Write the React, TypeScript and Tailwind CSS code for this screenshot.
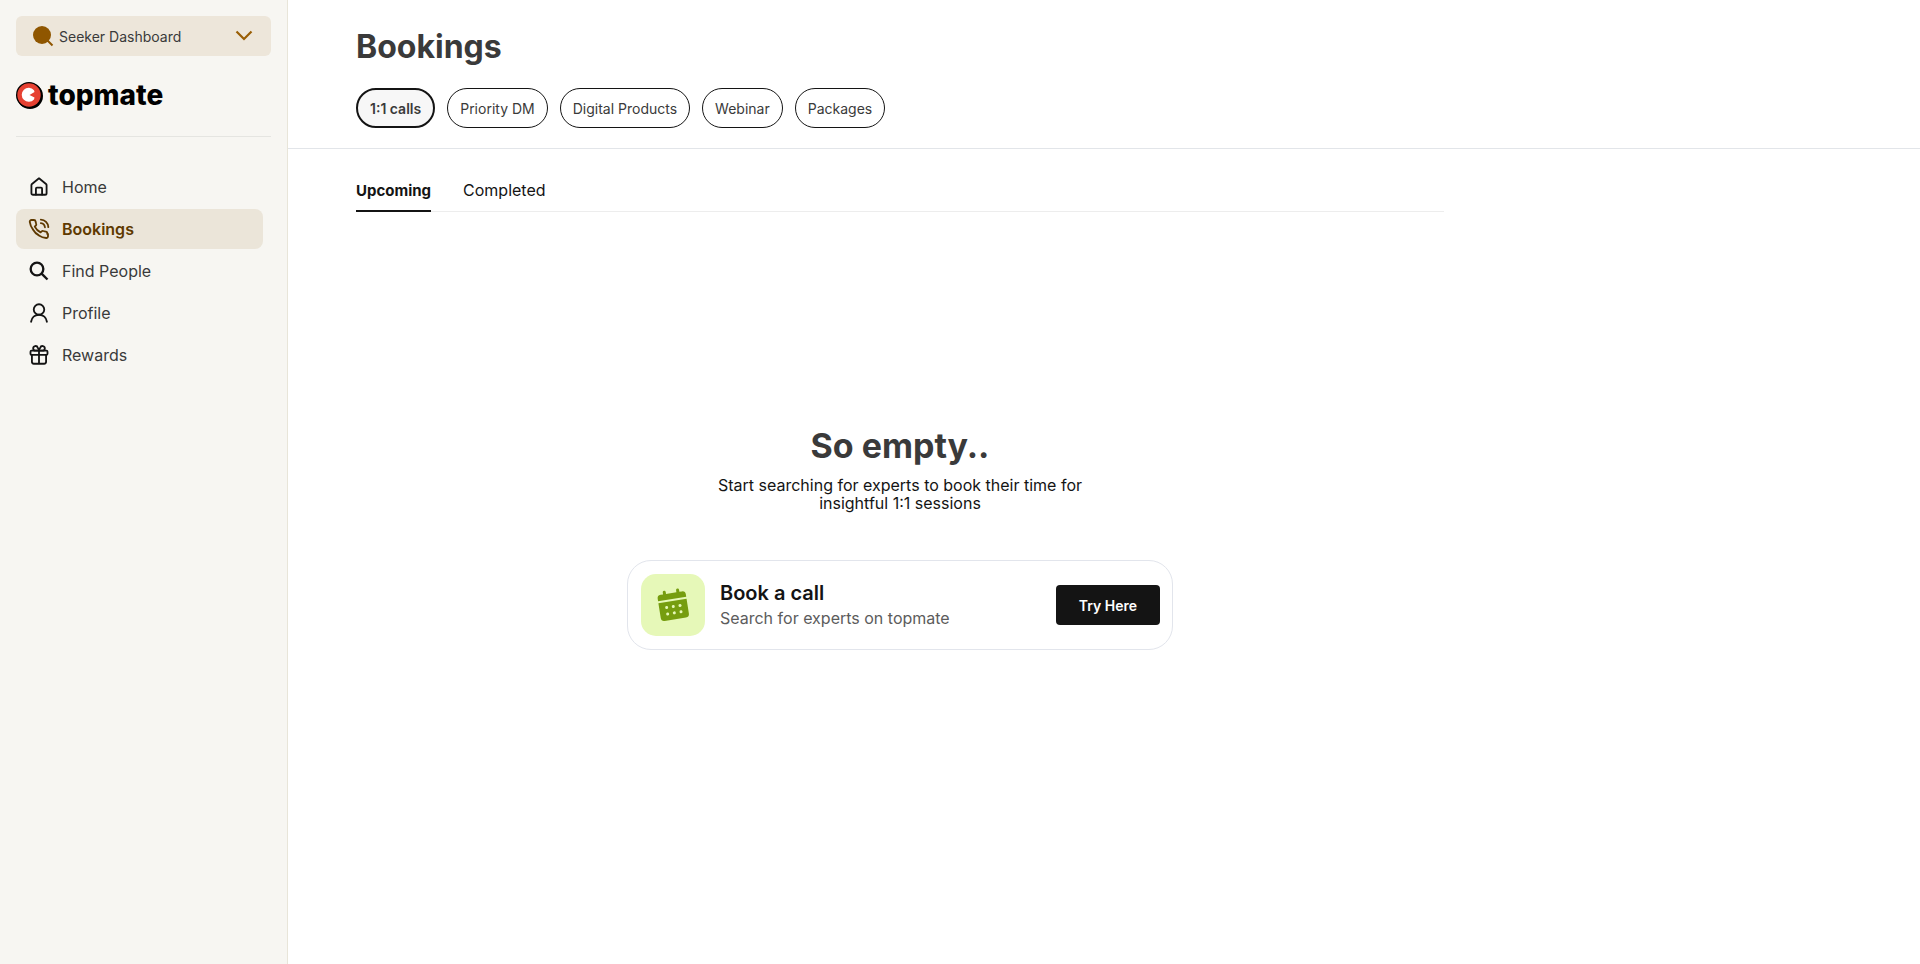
import type { ReactNode } from 'react';
import clsx from 'clsx';

const NAV_ITEMS: { label: string; icon: ReactNode; active?: boolean }[] = [
    {
        label: 'Home',
        icon: (
            <>
                <path d="M2.900 9.800v9.600a1.900 1.900 0 0 0 1.900 1.900h14.400a1.900 1.900 0 0 0 1.900-1.900V9.800a2 2 0 0 0-.7-1.500L12 1.600 3.600 8.300a2 2 0 0 0-.7 1.500z" />
                <path d="M8.300 21v-7a1.200 1.200 0 0 1 1.200-1.200h5a1.200 1.200 0 0 1 1.200 1.200v7" />
            </>
        ),
    },
    {
        label: 'Bookings',
        active: true,
        icon: (
            <>
                <path d="M22.800 17.800v3a2 2 0 0 1-2.200 2 20 20 0 0 1-8.700-3.100 19.700 19.700 0 0 1-7.200-7.200A19.800 19.800 0 0 1 .9 3.400a2 2 0 0 1 2-2.200h3a2 2 0 0 1 2 1.700c.1 1 .4 1.900.7 2.800a2 2 0 0 1-.4 2.100L6.900 9.100a16 16 0 0 0 7 7l1.300-1.300a2 2 0 0 1 2.100-.4c.9.300 1.800.6 2.800.7a2 2 0 0 1 1.700 2.700z" />
                <path d="M14.200.8a9.500 9.500 0 0 1 9 9" />
                <path d="M14.200 5a5.500 5.500 0 0 1 4.900 4.900" />
            </>
        ),
    },
    {
        label: 'Find People',
        icon: (
            <>
                <circle cx="9.600" cy="9.600" r="7.600" strokeWidth="2.800" />
                <path d="m14.800 14.800 7.400 7.400" strokeWidth="2.800" strokeLinecap="butt" />
            </>
        ),
    },
    {
        label: 'Profile',
        icon: (
            <>
                <circle cx="12" cy="7.800" r="6.300" />
                <path d="M2.500 22.500c.7-4.800 4.400-8.400 9.500-8.400s8.800 3.600 9.500 8.400" />
            </>
        ),
    },
    {
        label: 'Rewards',
        icon: (
            <>
                <rect x="1.800" y="6.800" width="20.400" height="5" rx="1.300" />
                <path d="M3.500 11.800v8.400A2.300 2.300 0 0 0 5.800 22.500h12.400a2.300 2.300 0 0 0 2.300-2.300v-8.400M12 6.800v15.700" />
                <path d="M12 6.800H7.800a2.800 2.800 0 1 1 2.700-3.600c.8 1.100 1.500 2.500 1.500 3.600zM12 6.800h4.200a2.800 2.800 0 1 0-2.700-3.600c-.8 1.100-1.500 2.500-1.500 3.600z" />
            </>
        ),
    },
];

const CATEGORIES = ['1:1 calls', 'Priority DM', 'Digital Products', 'Webinar', 'Packages'];

function DashboardSwitcher() {
    return (
        <div className="relative">
            <select
                aria-label="Dashboard"
                className="h-10 w-full appearance-none rounded-md bg-[#ede6da] pl-[43px] text-[14px] text-[#3a3a3a]"
            >
                <option>Seeker Dashboard</option>
            </select>
            <svg className="pointer-events-none absolute left-4 top-[9px] size-[22px]" viewBox="0 0 22 22">
                <circle cx="10" cy="10" r="9" fill="#8f5600" />
                <path d="m15.500 15.500 5 5" stroke="#8f5600" strokeWidth="2" />
            </svg>
            <svg className="pointer-events-none absolute right-[18px] top-[14px] h-3 w-[18px]" viewBox="0 0 18 12" fill="none">
                <path d="m1.500 1.500 7.500 7.500 7.500-7.500" stroke="#9a5e05" strokeWidth="2.200" />
            </svg>
        </div>
    );
}

function Logo() {
    return (
        <a href="#" className="mt-[25px] flex h-7 items-center gap-[5px]">
            <svg className="size-[27px]" viewBox="0 0 27 27">
                <circle cx="13" cy="13" r="13" fill="#000" />
                <circle cx="14" cy="14" r="13" fill="#000" />
                <circle cx="13" cy="13" r="11.700" fill="#e64132" />
                <path d="M18 8.200A7 7 0 1 0 18 17.400L18.500 15.500L13.500 13L18.500 10z" fill="#fff" />
            </svg>
            <span className="text-[28px] leading-7 font-extrabold text-black">topmate</span>
        </a>
    );
}

function Sidebar() {
    return (
        <aside className="w-72 shrink-0 border-r border-[#e8e5d9] bg-[#f7f6f2] p-4">
            <DashboardSwitcher />
            <Logo />
            <hr className="mt-[27px] border-[#e5e5e1]" />
            <nav className="mt-[30px] mr-2 flex flex-col gap-0.5">
                {NAV_ITEMS.map(({ label, icon, active }) => (
                    <a
                        key={label}
                        href="#"
                        className={clsx(
                            'flex h-10 items-center gap-[13px] rounded-lg px-[13px] text-[16px]',
                            active ? 'bg-[#ebe5d9] font-semibold text-[#5e3900]' : 'text-[#3a3a3a]',
                        )}
                    >
                        <svg
                            className={clsx('size-5', !active && 'text-[#141414]')}
                            viewBox="0 0 24 24"
                            fill="none"
                            stroke="currentColor"
                            strokeWidth="2.200"
                            strokeLinecap="round"
                            strokeLinejoin="round"
                            overflow="visible"
                        >
                            {icon}
                        </svg>
                        {label}
                    </a>
                ))}
            </nav>
        </aside>
    );
}

function CalendarTile() {
    return (
        <svg className="h-[62px] w-16 shrink-0" viewBox="0 0 64 62">
            <rect width="64" height="62" rx="15" fill="#e6f8b8" />
            <g transform="rotate(-9 32 32)" fill="#769d0f">
                <path d="M18 25v-2.500a3.500 3.500 0 0 1 3.500-3.500h2.500v-2a1.500 1.500 0 0 1 3 0v2h10.500v-2a1.500 1.500 0 0 1 3 0v2h2.500a3.500 3.500 0 0 1 3.500 3.500V25z" />
                <path d="M18 27H46.500v15a3.500 3.500 0 0 1-3.500 3.500H21.500a3.500 3.500 0 0 1-3.500-3.500z" />
                <g fill="#e6f8b8">
                    <circle cx="25.500" cy="32.500" r="1.500" />
                    <circle cx="32.200" cy="32.500" r="1.500" />
                    <circle cx="39" cy="32.500" r="1.500" />
                    <circle cx="25.500" cy="39" r="1.500" />
                    <circle cx="32.200" cy="39" r="1.500" />
                    <circle cx="39" cy="39" r="1.500" />
                </g>
            </g>
        </svg>
    );
}

function EmptyState() {
    return (
        <section className="mt-[210px] flex flex-col items-center">
            <h2 className="text-[34px] leading-[48px] font-bold text-[#3a3a3a]">So empty..</h2>
            <p className="mt-1.5 w-[380px] text-center text-[16px] leading-[18px] text-[#141414]">
                Start searching for experts to book their time for insightful 1:1 sessions
            </p>
            <div className="mt-12 flex h-[90px] w-full max-w-[546px] items-center rounded-3xl border border-[#e2e5ec] pr-3 pl-[13px]">
                <CalendarTile />
                <div className="ml-[15px] flex-1">
                    <h3 className="text-[20px] leading-[26px] font-semibold text-[#141414]">Book a call</h3>
                    <p className="text-[16px] leading-6 text-[#5c5c5c]">Search for experts on topmate</p>
                </div>
                <button className="h-10 w-[104px] rounded bg-[#141414] text-[14px] font-semibold text-white">Try Here</button>
            </div>
        </section>
    );
}

export default function App() {
    return (
        <div className="flex min-h-screen bg-white font-['Inter',sans-serif]">
            <Sidebar />
            <main className="min-w-0 flex-1">
                <header className="border-b border-[#e2e5e9] pt-[25px] pb-5 pl-[68px]">
                    <h1 className="text-[32px] leading-[44px] font-bold text-[#3a3a3a]">Bookings</h1>
                    <div className="mt-[19px] flex flex-wrap gap-3">
                        {CATEGORIES.map((name, i) => (
                            <button
                                key={name}
                                className={clsx(
                                    'h-10 rounded-full border-[#141414] px-3 text-[14px] text-[#3a3a3a]',
                                    i === 0 ? 'border-2 bg-[#f7f7f7] font-semibold' : 'border',
                                )}
                            >
                                {name}
                            </button>
                        ))}
                    </div>
                </header>
                <div className="ml-[68px] w-2/3 pt-5">
                    <div role="tablist" className="flex h-[43px] gap-8 border-b border-[#ededed]">
                        <button role="tab" aria-selected="true" className="-mb-px border-b-2 border-[#141414] pt-1 text-[15px] font-bold text-[#141414]">
                            Upcoming
                        </button>
                        <button role="tab" aria-selected="false" className="text-[16px] text-[#141414]">
                            Completed
                        </button>
                    </div>
                    <EmptyState />
                </div>
            </main>
        </div>
    );
}
